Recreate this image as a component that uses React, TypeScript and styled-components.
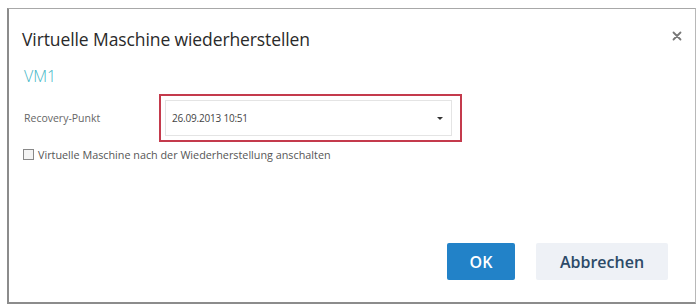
import React from "react";
import styled, { createGlobalStyle } from "styled-components";

const Global = createGlobalStyle`
  html, body { margin: 0; padding: 0; background: #ffffff; }
  body { font-family: "Open Sans", "Noto Sans", sans-serif; }
`;

const Page = styled.div`
  width: 698px;
  height: 306px;
  padding: 8px 0 0 7px;
  box-sizing: border-box;
`;

const Dialog = styled.div`
  width: 689px;
  height: 296px;
  box-sizing: border-box;
  background: #fff;
  border-top: 1px solid #a8a8a8;
  border-right: 1px solid #b8b8b8;
  border-left: 2px solid #8c8c8c;
  border-bottom: 2px solid #8c8c8c;
  display: flex;
  flex-direction: column;
  padding: 16px 12px 22px 13px;
`;

const Header = styled.div`
  display: flex;
  justify-content: space-between;
  align-items: center;
  height: 28px;
`;

const Title = styled.h1`
  margin: 0;
  font-size: 17.5px;
  font-weight: 400;
  color: #2a2a2a;
  letter-spacing: -0.1px;
`;

const Close = styled.button`
  border: 0;
  background: none;
  padding: 0;
  width: 12px;
  height: 12px;
  display: flex;
  align-items: center;
  justify-content: center;
  margin-bottom: 7px;
`;

const VmName = styled.div`
  margin-top: 12px;
  margin-left: 2px;
  font-size: 16px;
  font-weight: 300;
  color: #3fb6c6;
`;

const Row = styled.div`
  display: flex;
  align-items: center;
  margin-top: 7px;
`;

const Label = styled.label`
  width: 137px;
  box-sizing: border-box;
  padding-left: 2px;
  font-size: 10.5px;
  color: #666;
`;

const Highlight = styled.div`
  border: 2px solid #c43a4c;
  padding: 4px 8px 4px 4px;
  width: 303px;
  box-sizing: border-box;
`;

const Select = styled.div`
  height: 34px;
  border: 1px solid #e4e4e4;
  display: flex;
  align-items: center;
  justify-content: space-between;
  padding: 0 8px 0 6px;
  font-size: 10px;
  color: #444;
  letter-spacing: -0.2px;
`;

const Caret = styled.span`
  width: 0;
  height: 0;
  border-left: 3px solid transparent;
  border-right: 3px solid transparent;
  border-top: 3px solid #333;
`;

const CheckRow = styled.label`
  display: flex;
  align-items: center;
  gap: 4px;
  margin-top: 5px;
  margin-left: 1px;
  font-size: 10.8px;
  color: #555;
  letter-spacing: 0px;
`;

const Box = styled.span`
  width: 9px;
  height: 9px;
  border: 1px solid #888;
  background: #f4f4f4;
  display: inline-block;
`;

const Footer = styled.div`
  margin-top: auto;
  display: flex;
  justify-content: flex-end;
  gap: 21px;
  padding-right: 15px;
`;

const Button = styled.button<{ $primary?: boolean }>`
  height: 37px;
  border: 0;
  border-radius: 2px;
  font-family: "Open Sans", "Noto Sans", sans-serif;
  font-size: 16px;
  font-weight: 600;
  padding: 0;
  width: ${(p) => (p.$primary ? "68px" : "132px")};
  background: ${(p) => (p.$primary ? "#2282c8" : "#eef1f6")};
  color: ${(p) => (p.$primary ? "#ffffff" : "#2c4a68")};
`;

export default function App() {
  return (
    <>
      <Global />
      <Page>
        <Dialog>
          <Header>
            <Title>Virtuelle Maschine wiederherstellen</Title>
            <Close aria-label="Schließen">
              <svg width="10" height="10" viewBox="0 0 10 10">
                <path d="M1.5 1.5 L8.5 8.5 M8.5 1.5 L1.5 8.5" stroke="#777" strokeWidth="1.8" strokeLinecap="round" />
              </svg>
            </Close>
          </Header>
          <VmName>VM1</VmName>
          <Row>
            <Label>Recovery-Punkt</Label>
            <Highlight>
              <Select>
                <span>26.09.2013 10:51</span>
                <Caret />
              </Select>
            </Highlight>
          </Row>
          <CheckRow>
            <Box />
            Virtuelle Maschine nach der Wiederherstellung anschalten
          </CheckRow>
          <Footer>
            <Button $primary>OK</Button>
            <Button>Abbrechen</Button>
          </Footer>
        </Dialog>
      </Page>
    </>
  );
}
